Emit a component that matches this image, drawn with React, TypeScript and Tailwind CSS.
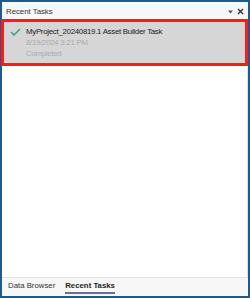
import React from 'react';

export default function App() {
  return (
    <div
      className="flex h-[298px] w-[250px] flex-col border-2 border-[#1e5a8a] bg-[#f7f7f7] text-[7.8px] text-[#1e1e1e]"
      style={{ fontFamily: '"Liberation Sans", Arial, sans-serif' }}
    >
      <div className="flex h-[17px] items-center justify-between pl-[4px] pr-[4px] pt-[2px] leading-none">
        <span className="text-[7.8px] text-[#333]">Recent Tasks</span>
        <div className="flex items-center gap-[4px] text-[#333]">
          <svg width="5" height="4" viewBox="0 0 5 4">
            <path d="M0 0.5 L5 0.5 L2.5 3.5 Z" fill="#555" />
          </svg>
          <svg width="7" height="7" viewBox="0 0 7 7">
            <path d="M1 1 L6 6 M6 1 L1 6" stroke="#333" strokeWidth="1.4" />
          </svg>
        </div>
      </div>
      <div className="flex flex-1 flex-col border-b border-r border-[#e2e2e2] bg-white">
        <div className="-mx-[1px] flex border-[3px] border-[#ff1a1a] bg-[#d6d6d6] pb-[4px] pl-[6px] pt-[4px]">
          <svg width="11" height="8" viewBox="0 0 11 8" className="mt-[2px] mr-[5px] shrink-0">
            <path d="M1 4 L4 7 L10 1" fill="none" stroke="#3f9f80" strokeWidth="1.5" />
          </svg>
          <div className="flex flex-col text-[7.8px] leading-[11px] tracking-[-0.25px]">
            <span className="text-[#1a1a1a]">MyProject_20240819.1 Asset Builder Task</span>
            <span className="text-[#acacac]">8/19/2024 3:21 PM</span>
            <span className="text-[#acacac]">Completed</span>
          </div>
        </div>
      </div>
      <div className="flex h-[18px] items-start gap-[10px] pl-[6px] pt-[4px] leading-none">
        <span className="text-[#333]">Data Browser</span>
        <span className="border-b-2 border-[#6c6c9c] pb-[2px] font-bold text-[#1e1e1e]">Recent Tasks</span>
      </div>
    </div>
  );
}
